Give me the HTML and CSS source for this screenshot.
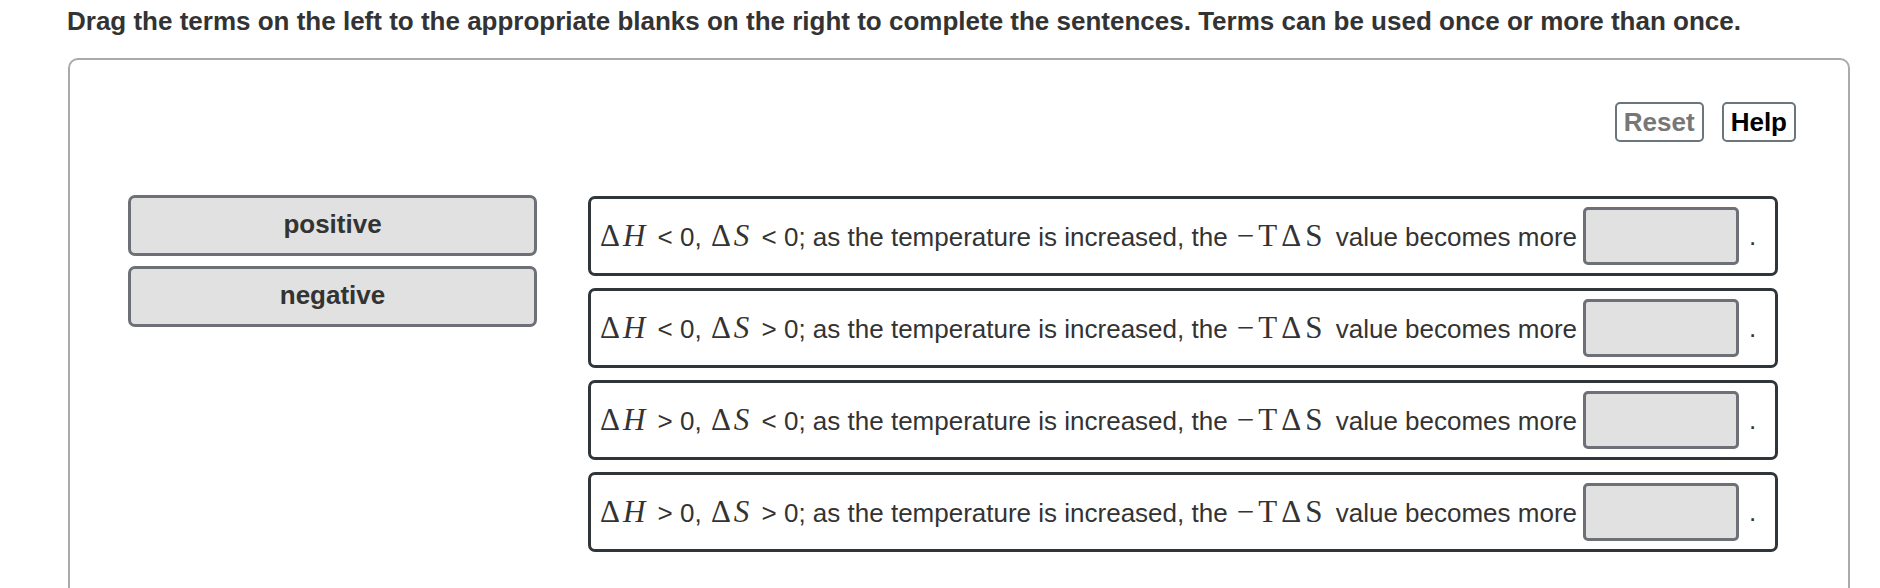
FILE: index.html
```html
<!DOCTYPE html>
<html lang="en">
<head>
<meta charset="utf-8">
<title>Drag the terms</title>
<link rel="stylesheet" href="styles.css">
</head>
<body>
<h1 class="prompt">Drag the terms on the left to the appropriate blanks on the right to complete the sentences. Terms can be used once or more than once.</h1>
<div class="panel">
  <div class="toolbar">
    <button class="btn btn-reset">Reset</button>
    <button class="btn btn-help">Help</button>
  </div>
  <div class="workspace">
    <div class="terms">
      <div class="term">positive</div>
      <div class="term">negative</div>
    </div>
    <div class="sentences">
      <div class="sentence">
        <span class="text"><span class="m">Δ<i>H</i></span> &lt; 0, <span class="m">Δ<i>S</i></span> &lt; 0; as the temperature is increased, the <span class="m big">−TΔS</span> value becomes more</span>
        <span class="blank"></span><span class="dot">.</span>
      </div>
      <div class="sentence">
        <span class="text"><span class="m">Δ<i>H</i></span> &lt; 0, <span class="m">Δ<i>S</i></span> &gt; 0; as the temperature is increased, the <span class="m big">−TΔS</span> value becomes more</span>
        <span class="blank"></span><span class="dot">.</span>
      </div>
      <div class="sentence">
        <span class="text"><span class="m">Δ<i>H</i></span> &gt; 0, <span class="m">Δ<i>S</i></span> &lt; 0; as the temperature is increased, the <span class="m big">−TΔS</span> value becomes more</span>
        <span class="blank"></span><span class="dot">.</span>
      </div>
      <div class="sentence">
        <span class="text"><span class="m">Δ<i>H</i></span> &gt; 0, <span class="m">Δ<i>S</i></span> &gt; 0; as the temperature is increased, the <span class="m big">−TΔS</span> value becomes more</span>
        <span class="blank"></span><span class="dot">.</span>
      </div>
    </div>
  </div>
</div>
</body>
</html>
```
FILE: styles.css
```css
html, body {
  margin: 0;
  padding: 0;
  background: #ffffff;
  overflow: hidden;
}
body {
  font-family: "Liberation Sans", Arial, Helvetica, sans-serif;
  color: #333333;
  height: 588px;
}
.prompt {
  margin: 0;
  padding: 6px 0 0 67px;
  font-size: 26px;
  font-weight: bold;
  line-height: 30px;
  color: #333333;
}
.panel {
  box-sizing: border-box;
  margin: 22px 0 0 68px;
  width: 1782px;
  height: 600px;
  border: 2px solid #aaaaaa;
  border-radius: 10px;
}
.toolbar {
  display: flex;
  justify-content: flex-end;
  gap: 18px;
  padding: 42px 52px 0 0;
}
.btn {
  box-sizing: border-box;
  height: 40px;
  padding: 0 7px;
  background: #ffffff;
  border: 2px solid #6b757c;
  border-radius: 5px;
  font-family: "Liberation Sans", Arial, Helvetica, sans-serif;
  font-weight: bold;
  font-size: 26px;
  line-height: 36px;
}
.btn-reset { color: #777777; }
.btn-help { color: #000000; }
.workspace {
  display: flex;
  align-items: flex-start;
  margin-top: 53px;
  padding-left: 58px;
}
.terms {
  display: flex;
  flex-direction: column;
  gap: 10px;
  width: 409px;
}
.term {
  box-sizing: border-box;
  height: 61px;
  display: flex;
  align-items: center;
  justify-content: center;
  background: #e1e1e1;
  border: 3px solid #6d7077;
  border-radius: 7px;
  font-weight: bold;
  font-size: 26px;
  color: #333333;
  padding-bottom: 3px;
}
.sentences {
  display: flex;
  flex-direction: column;
  gap: 12px;
  margin-left: 51px;
  margin-top: 1px;
  width: 1190px;
}
.sentence {
  box-sizing: border-box;
  height: 80px;
  display: flex;
  align-items: center;
  padding-left: 7px;
  border: 3px solid #30353a;
  border-radius: 7px;
  font-size: 26px;
  color: #333333;
  white-space: nowrap;
}
.m {
  font-family: "Liberation Serif", "DejaVu Serif", serif;
  font-size: 31px;
  letter-spacing: 3px;
  margin: 0 2px;
  color: #333333;
}
.m i { font-style: italic; }
.big { letter-spacing: 4px; }
.blank {
  box-sizing: border-box;
  width: 156px;
  height: 58px;
  margin-left: 6px;
  background: #e1e1e1;
  border: 3px solid #6d7077;
  border-radius: 5px;
}
.dot {
  margin-left: 10px;
}
```
